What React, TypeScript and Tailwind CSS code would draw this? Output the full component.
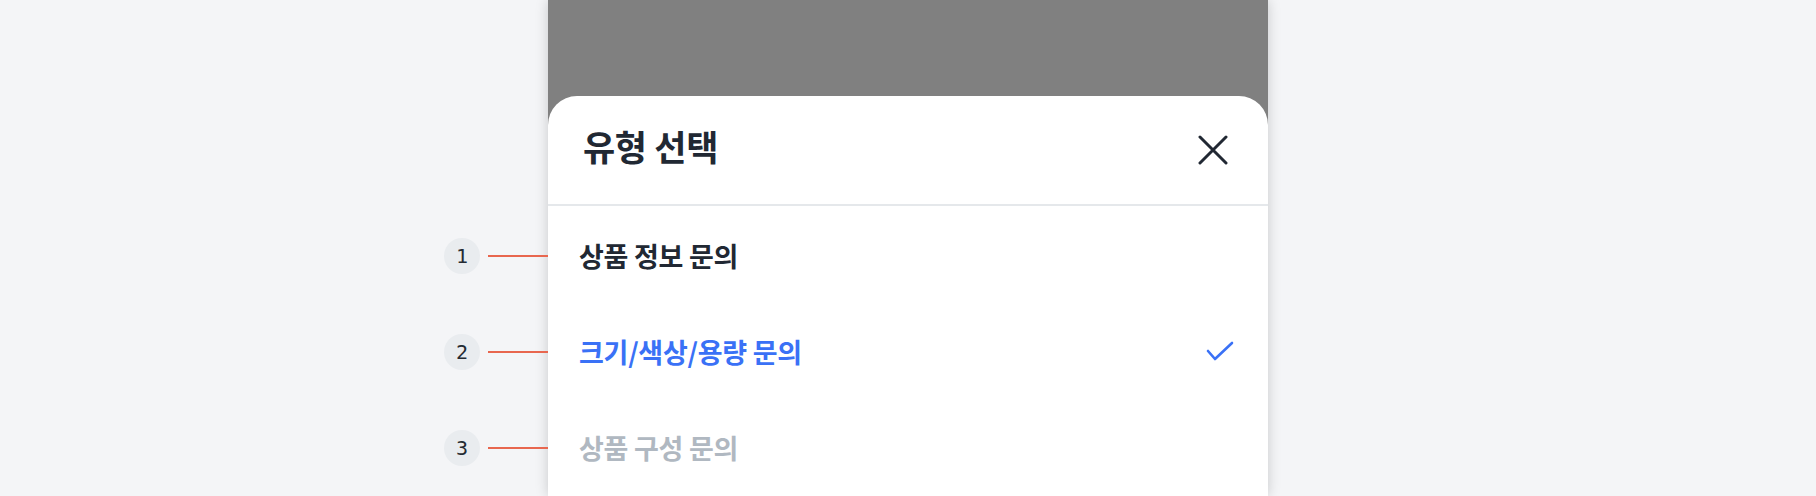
import React from "react";

const KR = { fontFamily: '"Noto Sans CJK KR", "Noto Sans", sans-serif' };

function Annotation({ n }: { n: number }) {
  return (
    <div className="absolute right-full top-1/2 -translate-y-1/2 flex items-center">
      <div
        className="w-9 h-9 rounded-full bg-[#e9ecef] flex items-center justify-center text-[20px] text-[#252b33]"
        style={{ fontFamily: '"DejaVu Sans Mono", monospace' }}
      >
        {n}
      </div>
      <div className="ml-2 w-[60px] h-[2px] bg-[#e8674f]" />
    </div>
  );
}

function Row({
  n,
  label,
  color,
  checked,
}: {
  n: number;
  label: string;
  color: string;
  checked?: boolean;
}) {
  return (
    <div className="relative h-[96px] flex items-center justify-between pl-[31px] pr-[34px]">
      <Annotation n={n} />
      <span className={`text-[27px] font-bold tracking-[-0.01em] ${color}`} style={KR}>
        {label}
      </span>
      {checked && (
        <svg width="28" height="22" viewBox="0 0 28 22" fill="none">
          <polyline
            points="2,10 9,18 26,2"
            stroke="#3a71f6"
            strokeWidth="2.6"
            strokeLinecap="round"
            strokeLinejoin="round"
          />
        </svg>
      )}
    </div>
  );
}

export default function App() {
  return (
    <div className="w-[1816px] h-[496px] bg-[#f4f5f7] flex justify-center overflow-hidden">
      <div className="relative w-[720px] h-[496px] bg-[#808080] flex flex-col shadow-[0_0_12px_rgba(0,0,0,0.18)]">
        <div className="h-[96px] shrink-0" />
        <div className="flex-1 bg-white rounded-t-[29px] flex flex-col">
          <div className="h-[110px] shrink-0 flex items-center justify-between pl-[35px] pr-[40px] border-b-2 border-[#e5e8eb]">
            <span className="text-[35px] font-bold tracking-[-0.01em] text-[#212833] mt-[-8px]" style={KR}>
              유형 선택
            </span>
            <svg width="30" height="30" viewBox="0 0 30 30" fill="none">
              <path
                d="M2 2 L28 28 M28 2 L2 28"
                stroke="#212833"
                strokeWidth="3"
                strokeLinecap="round"
              />
            </svg>
          </div>
          <div className="flex flex-col pt-[2px]">
            <Row n={1} label="상품 정보 문의" color="text-[#212833]" />
            <Row n={2} label="크기/색상/용량 문의" color="text-[#3a71f6]" checked />
            <Row n={3} label="상품 구성 문의" color="text-[#b0b8c1]" />
          </div>
        </div>
      </div>
    </div>
  );
}
